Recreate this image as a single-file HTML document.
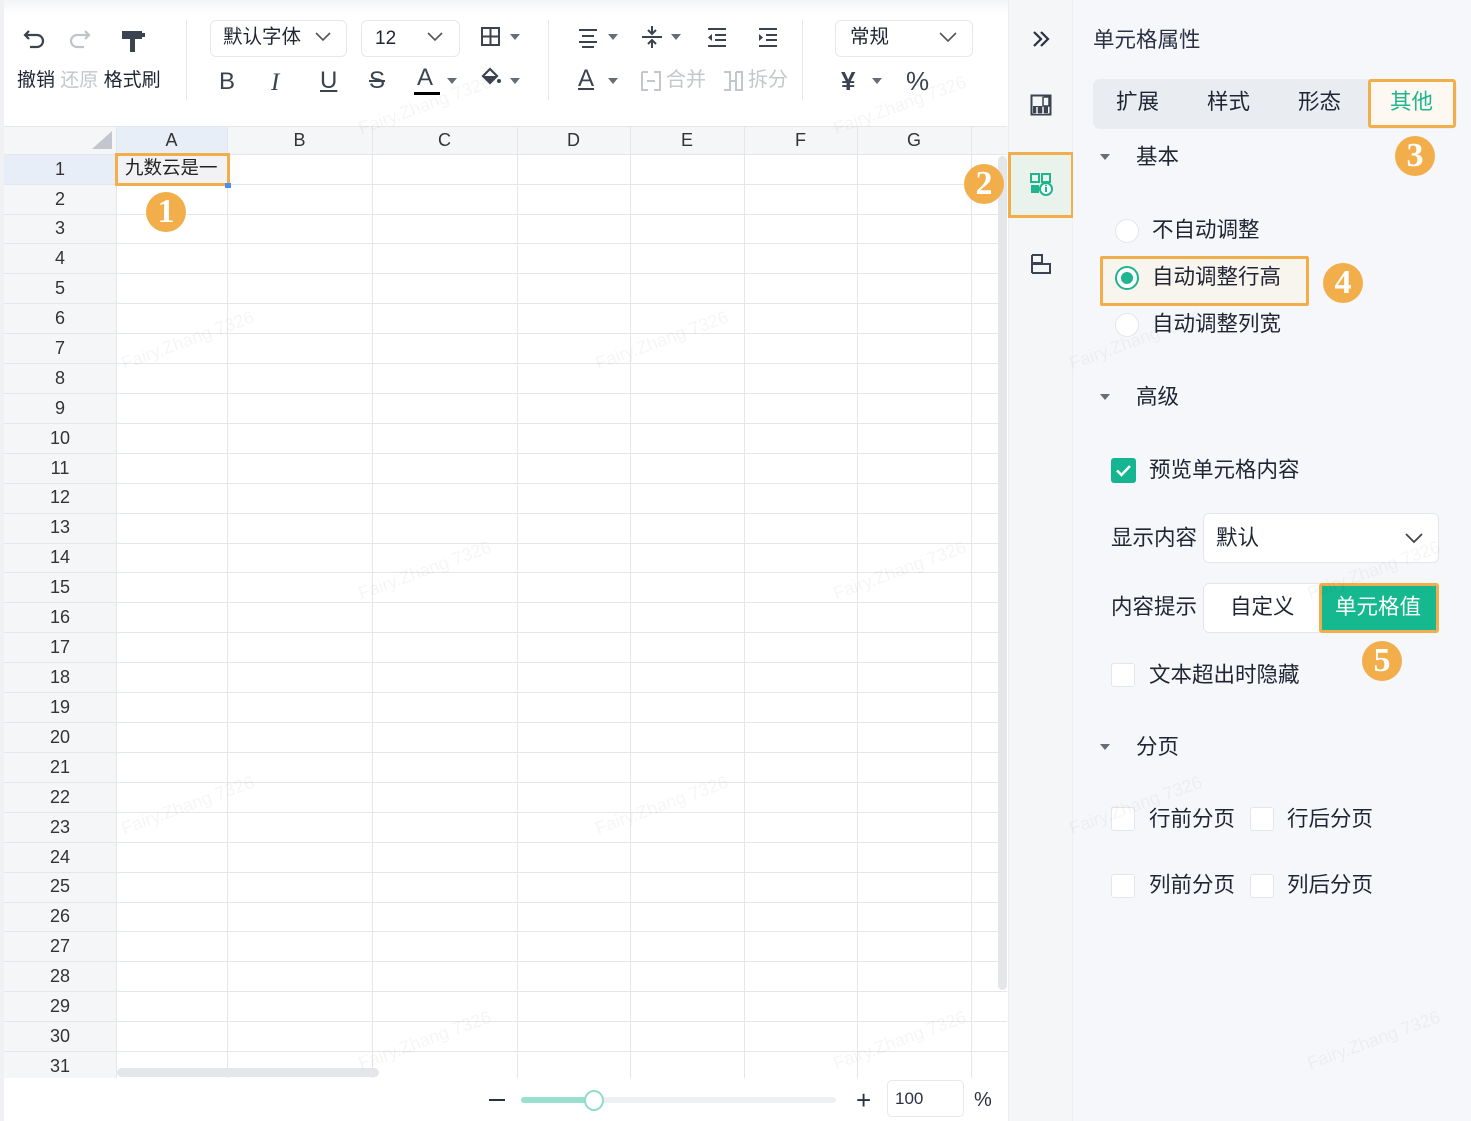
<!DOCTYPE html>
<html><head><meta charset="utf-8">
<style>
*{margin:0;padding:0;box-sizing:border-box}
body{width:1471px;height:1121px;position:relative;overflow:hidden;background:#fff;font-family:"Liberation Sans","Noto Sans CJK SC",sans-serif;color:#1f2533}
.a{position:absolute}
.t{position:absolute;white-space:nowrap;line-height:1}
.rn{position:absolute;left:4px;width:112px;text-align:center;font-size:18px;color:#333;line-height:30px}
.hl{position:absolute;left:4px;width:1003px;height:1px;background:#e4e6ea}
.vl{position:absolute;top:126px;height:952px;width:1px;background:#e4e6ea}
.ch{position:absolute;top:126px;height:28px;line-height:28px;text-align:center;font-size:18px;color:#333}
.badge{position:absolute;width:40px;height:40px;border-radius:50%;background:#f2ae4a;color:#fff;font-family:"Liberation Serif",serif;font-size:34px;font-weight:bold;text-align:center;line-height:40px}
.cb{position:absolute;width:24px;height:24px;background:#fff;border:1px solid #e3e6eb;border-radius:3px}
.rad{position:absolute;width:24px;height:24px;background:#fff;border:1px solid #e3e6eb;border-radius:50%}
.pt{font-size:21.5px;color:#1f2533}
.wm{position:absolute;font-size:18px;color:rgba(0,0,0,0.04);transform:rotate(-20deg);white-space:nowrap}
.tri{position:absolute;width:0;height:0;border-left:5px solid transparent;border-right:5px solid transparent;border-top:6px solid #666c78}
</style></head><body>

<!-- toolbar -->
<div class="a" style="left:0;top:0;width:1008px;height:126px;background:linear-gradient(#f3f4f6,#fff 14px)"></div>
<div class="a" style="left:0;top:0;width:4px;height:1121px;background:#f0f1f4"></div>
<svg class="a" style="left:22px;top:26px" width="26" height="26" viewBox="0 0 26 26"><path d="M7 5 L3 9 L7 13 M3 9 H15 A6 6 0 0 1 15 21 H8" fill="none" stroke="#3b4250" stroke-width="2.2"/></svg>
<svg class="a" style="left:66px;top:26px" width="26" height="26" viewBox="0 0 26 26"><path d="M19 5 L23 9 L19 13 M23 9 H11 A6 6 0 0 0 11 21 H18" fill="none" stroke="#bfc3ca" stroke-width="2.2"/></svg>
<svg class="a" style="left:118px;top:28px" width="30" height="26" viewBox="0 0 30 26"><rect x="4" y="3" width="20" height="8" fill="#3b4250"/><rect x="24" y="5" width="3" height="4" fill="#3b4250"/><rect x="12" y="11" width="5" height="4" fill="#3b4250"/><rect x="12" y="15" width="5" height="9" fill="#3b4250"/></svg>
<div class="t" style="left:17px;top:71px;font-size:19px;color:#1f2533">撤销 <span style="color:#c3c6cc">还原</span> 格式刷</div>
<div class="a" style="left:186px;top:20px;width:1px;height:80px;background:#e6e8ec"></div>

<div class="a" style="left:210px;top:20px;width:137px;height:37px;border:1px solid #e6e8ec;border-radius:6px"></div>
<div class="t" style="left:223px;top:28px;font-size:19.5px">默认字体</div>
<svg class="a" style="left:313px;top:30px" width="20" height="14"><path d="M3 3 L10 10 L17 3" fill="none" stroke="#555" stroke-width="1.6"/></svg>
<div class="a" style="left:361px;top:20px;width:99px;height:37px;border:1px solid #e6e8ec;border-radius:6px"></div>
<div class="t" style="left:375px;top:29px;font-size:19px">12</div>
<svg class="a" style="left:425px;top:30px" width="20" height="14"><path d="M3 3 L10 10 L17 3" fill="none" stroke="#555" stroke-width="1.6"/></svg>
<svg class="a" style="left:480px;top:26px" width="22" height="22"><rect x="2" y="2" width="17" height="17" fill="none" stroke="#3b4250" stroke-width="2"/><path d="M10.5 2V19M2 10.5H19" stroke="#3b4250" stroke-width="2"/></svg>
<div class="tri" style="left:510px;top:34px"></div>

<div class="t" style="left:219px;top:70px;font-size:24px;color:#3b4250">B</div>
<div class="t" style="left:271px;top:70px;font-size:25px;color:#3b4250;font-style:italic;font-family:'Liberation Serif',serif">I</div>
<div class="t" style="left:320px;top:69px;font-size:24px;color:#3b4250;text-decoration:underline">U</div>
<div class="t" style="left:369px;top:69px;font-size:24px;color:#3b4250;text-decoration:line-through">S</div>
<div class="t" style="left:417px;top:66px;font-size:24px;color:#3b4250">A</div>
<div class="a" style="left:414px;top:92px;width:26px;height:3px;background:#000"></div>
<div class="tri" style="left:447px;top:78px"></div>
<svg class="a" style="left:480px;top:66px" width="24" height="24"><path d="M3 10 L10 3 L17 10 L10 17Z" fill="none" stroke="#3b4250" stroke-width="2.2"/><path d="M3 10H17L10 17Z" fill="#3b4250"/><circle cx="19" cy="15" r="2" fill="#3b4250"/></svg>
<div class="tri" style="left:510px;top:78px"></div>
<div class="a" style="left:548px;top:20px;width:1px;height:80px;background:#e6e8ec"></div>

<svg class="a" style="left:577px;top:26px" width="22" height="22"><path d="M2 4H20M5 10H17M2 16H20M5 21H17" stroke="#3b4250" stroke-width="2"/></svg>
<div class="tri" style="left:608px;top:34px"></div>
<svg class="a" style="left:640px;top:24px" width="24" height="26"><path d="M2 13H22M12 2V10M8 6L12 10L16 6M12 24V16M8 20L12 16L16 20" fill="none" stroke="#3b4250" stroke-width="2"/></svg>
<div class="tri" style="left:671px;top:34px"></div>
<svg class="a" style="left:706px;top:26px" width="22" height="22"><path d="M2 3H20M9 9H20M9 14H20M2 20H20" stroke="#3b4250" stroke-width="2"/><path d="M6 8L2 11.5L6 15Z" fill="#3b4250"/></svg>
<svg class="a" style="left:757px;top:26px" width="22" height="22"><path d="M2 3H20M9 9H20M9 14H20M2 20H20" stroke="#3b4250" stroke-width="2"/><path d="M2 8L6 11.5L2 15Z" fill="#3b4250"/></svg>
<div class="t" style="left:578px;top:67px;font-size:24px;color:#3b4250;text-decoration:underline">A</div>
<div class="tri" style="left:608px;top:78px"></div>
<svg class="a" style="left:640px;top:70px" width="22" height="22"><path d="M2 2H8M2 2V20H8M14 2H20V20H14M7 11H11M15 11H11" fill="none" stroke="#c3c6cc" stroke-width="2"/></svg>
<div class="t" style="left:666px;top:70px;font-size:20px;color:#c3c6cc">合并</div>
<svg class="a" style="left:722px;top:70px" width="22" height="22"><path d="M2 2H8V20H2M14 2H20V20H14V2M9 11H13" fill="none" stroke="#c3c6cc" stroke-width="2"/></svg>
<div class="t" style="left:748px;top:70px;font-size:20px;color:#c3c6cc">拆分</div>
<div class="a" style="left:802px;top:20px;width:1px;height:80px;background:#e6e8ec"></div>
<div class="a" style="left:835px;top:20px;width:138px;height:37px;border:1px solid #e6e8ec;border-radius:6px"></div>
<div class="t" style="left:850px;top:28px;font-size:19.5px">常规</div>
<svg class="a" style="left:937px;top:30px" width="22" height="14"><path d="M3 3 L11 11 L19 3" fill="none" stroke="#555" stroke-width="1.6"/></svg>
<div class="t" style="left:841px;top:68px;font-size:26px;color:#3b4250;font-weight:bold">¥</div>
<div class="tri" style="left:872px;top:78px"></div>
<div class="t" style="left:906px;top:68px;font-size:26px;color:#3b4250">%</div>

<!-- grid -->
<div class="a" style="left:4px;top:126px;width:1004px;height:28px;background:#f5f6f8"></div>
<div class="a" style="left:4px;top:154px;width:112px;height:924px;background:#f5f6f8"></div>
<div class="a" style="left:116px;top:126px;width:111px;height:28px;background:#e8eef8"></div>
<div class="a" style="left:4px;top:154px;width:112px;height:30px;background:#e8eef8"></div>
<svg class="a" style="left:90px;top:129px" width="24" height="22"><path d="M22 2V20H2Z" fill="#c3c6cf"/></svg>
<div class="hl" style="top:126px"></div><div class="hl" style="top:154px"></div>
<div class="ch" style="left:116px;width:111px">A</div><div class="ch" style="left:227px;width:145px">B</div><div class="ch" style="left:372px;width:145px">C</div><div class="ch" style="left:517px;width:113px">D</div><div class="ch" style="left:630px;width:114px">E</div><div class="ch" style="left:744px;width:113px">F</div><div class="ch" style="left:857px;width:114px">G</div>
<div class="vl" style="left:116px"></div><div class="vl" style="left:227px"></div><div class="vl" style="left:372px"></div><div class="vl" style="left:517px"></div><div class="vl" style="left:630px"></div><div class="vl" style="left:744px"></div><div class="vl" style="left:857px"></div><div class="vl" style="left:971px"></div>
<div class="hl" style="top:184px"></div><div class="hl" style="top:214px"></div><div class="hl" style="top:243px"></div><div class="hl" style="top:273px"></div><div class="hl" style="top:303px"></div><div class="hl" style="top:333px"></div><div class="hl" style="top:363px"></div><div class="hl" style="top:393px"></div><div class="hl" style="top:423px"></div><div class="hl" style="top:453px"></div><div class="hl" style="top:483px"></div><div class="hl" style="top:513px"></div><div class="hl" style="top:543px"></div><div class="hl" style="top:572px"></div><div class="hl" style="top:602px"></div><div class="hl" style="top:632px"></div><div class="hl" style="top:662px"></div><div class="hl" style="top:692px"></div><div class="hl" style="top:722px"></div><div class="hl" style="top:752px"></div><div class="hl" style="top:782px"></div><div class="hl" style="top:812px"></div><div class="hl" style="top:842px"></div><div class="hl" style="top:872px"></div><div class="hl" style="top:902px"></div><div class="hl" style="top:931px"></div><div class="hl" style="top:961px"></div><div class="hl" style="top:991px"></div><div class="hl" style="top:1021px"></div><div class="hl" style="top:1051px"></div>
<div class="rn" style="top:154px">1</div><div class="rn" style="top:184px">2</div><div class="rn" style="top:213px">3</div><div class="rn" style="top:243px">4</div><div class="rn" style="top:273px">5</div><div class="rn" style="top:303px">6</div><div class="rn" style="top:333px">7</div><div class="rn" style="top:363px">8</div><div class="rn" style="top:393px">9</div><div class="rn" style="top:423px">10</div><div class="rn" style="top:453px">11</div><div class="rn" style="top:482px">12</div><div class="rn" style="top:512px">13</div><div class="rn" style="top:542px">14</div><div class="rn" style="top:572px">15</div><div class="rn" style="top:602px">16</div><div class="rn" style="top:632px">17</div><div class="rn" style="top:662px">18</div><div class="rn" style="top:692px">19</div><div class="rn" style="top:722px">20</div><div class="rn" style="top:752px">21</div><div class="rn" style="top:782px">22</div><div class="rn" style="top:812px">23</div><div class="rn" style="top:842px">24</div><div class="rn" style="top:871px">25</div><div class="rn" style="top:901px">26</div><div class="rn" style="top:931px">27</div><div class="rn" style="top:961px">28</div><div class="rn" style="top:991px">29</div><div class="rn" style="top:1021px">30</div><div class="rn" style="top:1051px">31</div>
<div class="a" style="left:4px;top:1078px;width:1004px;height:43px;background:#fff"></div>
<div class="a" style="left:115px;top:153px;width:115px;height:33px;border:3px solid #f2ae4a;background:#f2f2f4"></div>
<div class="t" style="left:125px;top:159px;font-size:18.5px;color:#222">九数云是一</div>
<div class="a" style="left:225px;top:183px;width:6px;height:5px;background:#4a8ef5"></div>
<div class="a" style="left:117px;top:1068px;width:262px;height:9px;border-radius:5px;background:#e5e6e9"></div>
<div class="a" style="left:998px;top:156px;width:9px;height:834px;border-radius:5px;background:#e5e6e9"></div>

<!-- zoom -->
<div class="a" style="left:489px;top:1099px;width:16px;height:2px;background:#2b3043"></div>
<div class="a" style="left:521px;top:1097px;width:315px;height:6px;border-radius:3px;background:#eef0f3"></div>
<div class="a" style="left:521px;top:1097px;width:73px;height:6px;border-radius:3px;background:#9be0cf"></div>
<div class="a" style="left:584px;top:1090px;width:20px;height:21px;border-radius:50%;background:#fff;border:2px solid #8fdcc9"></div>
<div class="t" style="left:856px;top:1087px;font-size:26px;color:#2b3043;font-weight:300">+</div>
<div class="a" style="left:887px;top:1080px;width:77px;height:37px;border:1px solid #e6e8ec;border-radius:5px"></div>
<div class="t" style="left:895px;top:1090px;font-size:17px;color:#2b3043">100</div>
<div class="t" style="left:974px;top:1090px;font-size:20px;color:#2b3043">%</div>

<!-- side bar -->
<div class="a" style="left:1008px;top:0;width:65px;height:1121px;background:#f5f6f8;border-left:1px solid #eceef1;border-right:1px solid #eceef1"></div>
<svg class="a" style="left:1030px;top:28px" width="22" height="22"><path d="M4 4L11 11L4 18M11 4L18 11L11 18" fill="none" stroke="#2b3043" stroke-width="2.2"/></svg>
<svg class="a" style="left:1030px;top:94px" width="22" height="22"><rect x="1.5" y="1.5" width="19" height="19" fill="none" stroke="#3b4250" stroke-width="2"/><rect x="3" y="12" width="15" height="7" fill="#3b4250"/><path d="M13 2V20M7 13V20" stroke="#f5f6f8" stroke-width="1.5"/><rect x="13" y="3" width="6" height="9" fill="none" stroke="#3b4250" stroke-width="1.5"/></svg>
<div class="a" style="left:1008px;top:152px;width:66px;height:66px;border:3px solid #f2ae4a;background:#e9f3eb"></div>
<svg class="a" style="left:1030px;top:173px" width="24" height="24"><rect x="1" y="1" width="8" height="8" fill="none" stroke="#1fb58f" stroke-width="2"/><rect x="12" y="1" width="8" height="8" fill="none" stroke="#1fb58f" stroke-width="2"/><rect x="1" y="12" width="8" height="8" fill="#1fb58f"/><circle cx="16" cy="16" r="6" fill="#fff" stroke="#1fb58f" stroke-width="2"/><path d="M16 14V19" stroke="#1fb58f" stroke-width="2"/><circle cx="16" cy="12.5" r="1" fill="#1fb58f"/></svg>
<svg class="a" style="left:1030px;top:253px" width="22" height="22"><path d="M2 2V20M2 2H12V10H2M2 11H20V20H2" fill="none" stroke="#3b4250" stroke-width="2"/></svg>
<div class="badge" style="left:964px;top:164px">2</div>

<!-- right panel -->
<div class="a" style="left:1073px;top:0;width:398px;height:1121px;background:#f5f7fa"></div>
<div class="t" style="left:1093px;top:30px;font-size:21.5px;color:#2b3043">单元格属性</div>
<div class="a" style="left:1093px;top:79px;width:364px;height:50px;background:#e9ecf0;border-radius:7px"></div>
<div class="t pt" style="left:1116px;top:92px">扩展</div>
<div class="t pt" style="left:1207px;top:92px">样式</div>
<div class="t pt" style="left:1298px;top:92px">形态</div>
<div class="a" style="left:1368px;top:79px;width:88px;height:49px;background:#fdf9f2;border:3px solid #f2ae4a;border-radius:3px"></div>
<div class="t pt" style="left:1390px;top:92px;color:#1fb58f">其他</div>
<div class="badge" style="left:1395px;top:136px">3</div>

<div class="tri" style="left:1100px;top:154px"></div>
<div class="t pt" style="left:1136px;top:147px">基本</div>
<div class="rad" style="left:1115px;top:219px"></div>
<div class="t pt" style="left:1152px;top:220px">不自动调整</div>
<div class="a" style="left:1100px;top:256px;width:209px;height:50px;border:3px solid #f2ae4a;background:#f8f4ee;border-radius:2px"></div>
<div class="rad" style="left:1115px;top:266px;border:2px solid #1fb58f"></div>
<div class="a" style="left:1121px;top:272px;width:12px;height:12px;border-radius:50%;background:#1fb58f"></div>
<div class="t pt" style="left:1152px;top:267px">自动调整行高</div>
<div class="badge" style="left:1323px;top:263px">4</div>
<div class="rad" style="left:1115px;top:313px"></div>
<div class="t pt" style="left:1152px;top:314px">自动调整列宽</div>

<div class="tri" style="left:1100px;top:394px"></div>
<div class="t pt" style="left:1136px;top:387px">高级</div>
<div class="a" style="left:1111px;top:458px;width:25px;height:25px;border-radius:3px;background:#14b590"></div>
<svg class="a" style="left:1111px;top:458px" width="25" height="25"><path d="M6 12.5L10.5 17L19 8" fill="none" stroke="#fff" stroke-width="2.5"/></svg>
<div class="t pt" style="left:1149px;top:460px">预览单元格内容</div>
<div class="t pt" style="left:1111px;top:528px">显示内容</div>
<div class="a" style="left:1203px;top:513px;width:236px;height:50px;background:#fff;border:1px solid #e3e6eb;border-radius:6px"></div>
<div class="t pt" style="left:1216px;top:528px">默认</div>
<svg class="a" style="left:1403px;top:531px" width="22" height="14"><path d="M3 3L11 11L19 3" fill="none" stroke="#444" stroke-width="1.8"/></svg>
<div class="t pt" style="left:1111px;top:597px">内容提示</div>
<div class="a" style="left:1203px;top:583px;width:236px;height:50px;background:#fff;border:1px solid #e3e6eb;border-radius:6px"></div>
<div class="t pt" style="left:1230px;top:597px">自定义</div>
<div class="a" style="left:1319px;top:583px;width:120px;height:50px;background:#16b88f;border:3px solid #f2ae4a;border-radius:3px"></div>
<div class="t pt" style="left:1335px;top:597px;color:#fff">单元格值</div>
<div class="badge" style="left:1362px;top:641px">5</div>
<div class="cb" style="left:1111px;top:663px"></div>
<div class="t pt" style="left:1149px;top:665px">文本超出时隐藏</div>

<div class="tri" style="left:1100px;top:744px"></div>
<div class="t pt" style="left:1136px;top:737px">分页</div>
<div class="cb" style="left:1111px;top:807px"></div>
<div class="t pt" style="left:1149px;top:809px">行前分页</div>
<div class="cb" style="left:1250px;top:807px"></div>
<div class="t pt" style="left:1287px;top:809px">行后分页</div>
<div class="cb" style="left:1111px;top:874px"></div>
<div class="t pt" style="left:1149px;top:875px">列前分页</div>
<div class="cb" style="left:1250px;top:874px"></div>
<div class="t pt" style="left:1287px;top:875px">列后分页</div>

<div class="badge" style="left:146px;top:192px">1</div>

<!-- watermarks -->
<div class="wm" style="left:355px;top:95px">Fairy.Zhang 7326</div>
<div class="wm" style="left:830px;top:95px">Fairy.Zhang 7326</div>
<div class="wm" style="left:118px;top:330px">Fairy.Zhang 7326</div>
<div class="wm" style="left:592px;top:330px">Fairy.Zhang 7326</div>
<div class="wm" style="left:1066px;top:330px">Fairy.Zhang 7326</div>
<div class="wm" style="left:355px;top:560px">Fairy.Zhang 7326</div>
<div class="wm" style="left:830px;top:560px">Fairy.Zhang 7326</div>
<div class="wm" style="left:1304px;top:560px">Fairy.Zhang 7326</div>
<div class="wm" style="left:118px;top:795px">Fairy.Zhang 7326</div>
<div class="wm" style="left:592px;top:795px">Fairy.Zhang 7326</div>
<div class="wm" style="left:1066px;top:795px">Fairy.Zhang 7326</div>
<div class="wm" style="left:355px;top:1030px">Fairy.Zhang 7326</div>
<div class="wm" style="left:830px;top:1030px">Fairy.Zhang 7326</div>
<div class="wm" style="left:1304px;top:1030px">Fairy.Zhang 7326</div>
</body></html>
